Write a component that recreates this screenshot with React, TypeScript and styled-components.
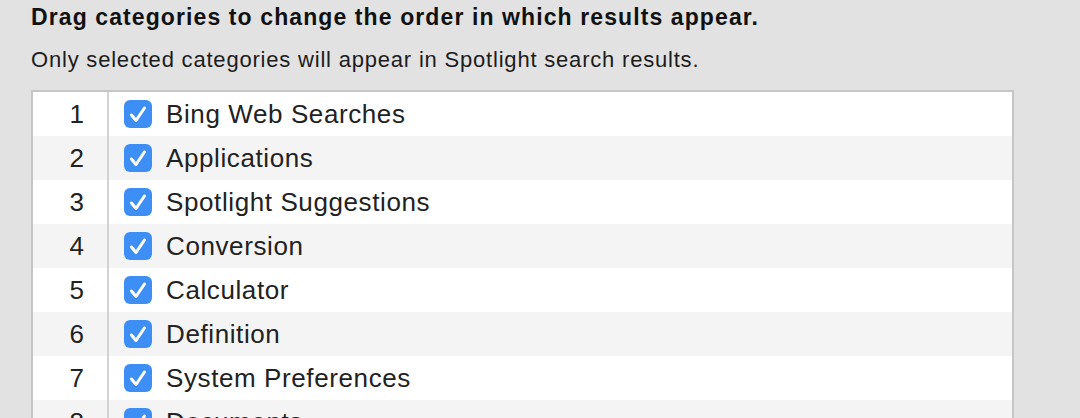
import * as React from 'react';
import styled, { createGlobalStyle } from 'styled-components';

const GlobalStyle = createGlobalStyle`
  html, body {
    margin: 0;
    padding: 0;
    background: #e2e2e2;
    overflow: hidden;
  }
  body {
    font-family: 'Liberation Sans', Arial, sans-serif;
    color: #222;
  }
`;

const Page = styled.div`
  padding: 4px 0 0 31px;
  width: 1080px;
  height: 418px;
  box-sizing: border-box;
`;

const Heading = styled.h1`
  margin: 0;
  font-size: 23px;
  line-height: 26px;
  font-weight: bold;
  letter-spacing: 1.1px;
  color: #111;
`;

const Note = styled.p`
  margin: 18px 0 0;
  font-size: 22px;
  line-height: 24px;
  letter-spacing: 0.8px;
  color: #1c1c1c;
`;

const Table = styled.div`
  margin-top: 18px;
  width: 983px;
  border: 2px solid #c6c6c6;
  border-bottom: none;
  box-sizing: border-box;
  background: #fff;
`;

const Row = styled.div<{ $alt: boolean }>`
  display: flex;
  align-items: center;
  height: 44px;
  background: ${(p) => (p.$alt ? '#f4f4f4' : '#fff')};
`;

const Index = styled.div`
  width: 76px;
  box-sizing: border-box;
  padding-right: 23px;
  font-size: 26px;
  color: #222;
  align-self: stretch;
  display: flex;
  align-items: center;
  justify-content: flex-end;
  border-right: 2px solid #d2d2d2;
`;

const Cell = styled.div`
  display: flex;
  align-items: center;
  padding-left: 15px;
  gap: 14px;
`;

const Box = styled.span`
  width: 28px;
  height: 28px;
  border-radius: 6px;
  background: #3d8ff6;
  display: flex;
  align-items: center;
  justify-content: center;
`;

const Label = styled.span`
  font-size: 26px;
  letter-spacing: 0.6px;
  color: #222;
`;

const categories = [
  'Bing Web Searches',
  'Applications',
  'Spotlight Suggestions',
  'Conversion',
  'Calculator',
  'Definition',
  'System Preferences',
  'Documents',
];

function Check() {
  return (
    <Box>
      <svg width="28" height="28" viewBox="0 0 28 28">
        <path d="M7.5 15 L12 20.5 L20.5 8" fill="none" stroke="#fff" strokeWidth="3" strokeLinecap="round" strokeLinejoin="round" />
      </svg>
    </Box>
  );
}

function App() {
  return (
    <Page>
      <GlobalStyle />
      <Heading>Drag categories to change the order in which results appear.</Heading>
      <Note>Only selected categories will appear in Spotlight search results.</Note>
      <Table>
        {categories.map((name, i) => (
          <Row key={name} $alt={i % 2 === 1}>
            <Index>{i + 1}</Index>
            <Cell>
              <Check />
              <Label>{name}</Label>
            </Cell>
          </Row>
        ))}
      </Table>
    </Page>
  );
}

export default App;
